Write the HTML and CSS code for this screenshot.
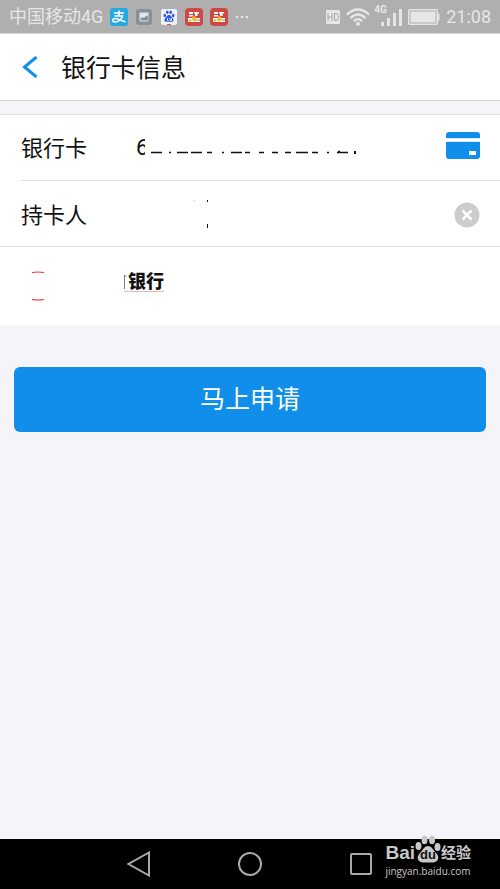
FILE: index.html
```html
<!DOCTYPE html>
<html lang="zh-CN">
<head>
<meta charset="utf-8">
<meta name="viewport" content="width=device-width, initial-scale=1">
<title>银行卡信息</title>
<link rel="stylesheet" href="styles.css">
</head>
<body>
<div class="status">
  <div class="status-left">
    <span class="carrier">中国移动4G</span>
    <svg class="app" viewBox="0 0 18 18"><rect width="18" height="18" rx="3" fill="#25a9e0"/><path d="M4 5h10M9 2.500v5M4.500 8h8c-1 3-4 6-7.500 6-3 0-3-3.500 0-3.500 3 0 6 2 10.500 3.500" fill="none" stroke="#fff" stroke-width="1.500"/></svg>
    <svg class="app" viewBox="0 0 18 18"><rect x="1" y="1" width="16" height="16" rx="3" fill="#84919b"/><rect x="4.500" y="4.500" width="9" height="9" rx="1" fill="#e2e6e8"/><path d="M5.500 12.500v-2l2-1.500 1.500 1 2.500-2.500 1.500 1v4z" fill="#84919b"/></svg>
    <svg class="app" viewBox="0 0 18 18"><rect x="1" y="1" width="16" height="16" rx="2" fill="#f0f1f5"/><g fill="#2c5be0"><ellipse cx="4.800" cy="7.500" rx="1.300" ry="1.800"/><ellipse cx="7.300" cy="4.300" rx="1.300" ry="1.800"/><ellipse cx="10.700" cy="4.300" rx="1.300" ry="1.800"/><ellipse cx="13.200" cy="7.500" rx="1.300" ry="1.800"/><path d="M9 7c2 0 2.500 2 4 3.500 1.500 2 0 3.500-2 3.200h-4c-2 .3-3.500-1.200-2-3.200C6.500 9 7 7 9 7z"/></g><path d="M7.500 10v2.500h1M10 10v2.500h1.500V10" fill="none" stroke="#fff" stroke-width=".8"/><path d="M7 16.500h4" stroke="#e05050"/></svg>
    <svg class="app" viewBox="0 0 18 18"><rect width="18" height="18" rx="4" fill="#d04744"/><path d="M4 4h4v2H4zM9 4h5v1.500h-1.500V8H10V5.500H9zM4 7h4v1.500H4zM3 10h12v4H3z" fill="#fff"/><path d="M8 8.500h2.500L12 12l-2.500 1.500L7 12zM3.500 11.500h3v2h-3z" fill="#edbd28"/><path d="M12 12h3" stroke="#bf7470"/></svg>
    <svg class="app" viewBox="0 0 18 18"><rect width="18" height="18" rx="4" fill="#d04744"/><path d="M4 4h4v2H4zM9 4h5v1.500h-1.500V8H10V5.500H9zM4 7h4v1.500H4zM3 10h12v4H3z" fill="#fff"/><path d="M8 8.500h2.500L12 12l-2.500 1.500L7 12zM3.500 11.500h3v2h-3z" fill="#edbd28"/><path d="M12 12h3" stroke="#bf7470"/></svg>
    <svg class="more" viewBox="0 0 14 4" fill="#e6e6e6"><circle cx="2" cy="2" r="1.300"/><circle cx="7" cy="2" r="1.300"/><circle cx="12" cy="2" r="1.300"/></svg>
  </div>
  <div class="status-right">
    <svg class="hd" viewBox="0 0 14 14"><rect width="14" height="14" rx="1" fill="#e6e6e6"/><path d="M2 3v8M6 3v8M2 7h4M8.500 3.500v7h1.500q2.500 0 2.500-3.500T10 3.500z" fill="none" stroke="#aaa" stroke-width="1"/></svg>
    <svg class="wifi" viewBox="0 0 24 18"><g fill="none" stroke="#e6e6e6" stroke-width="2.400"><path d="M1 6.500Q12-3.500 23 6.500M4.500 10Q12 3 19.500 10M8 13.200Q12 9 16 13.200"/></g><circle cx="12" cy="15.700" r="2" fill="#e6e6e6"/></svg>
    <div class="cell"><span class="network">4G</span><svg class="bars" viewBox="0 0 21 18" fill="#e6e6e6"><path d="M0 14h3v4H0zM6 10h3v8H6zM12 5h3v13h-3zM18 1h3v17h-3z"/></svg></div>
    <svg class="battery" viewBox="0 0 32 16"><rect x=".75" y=".75" width="28.500" height="14.500" rx="1" fill="none" stroke="#e6e6e6" stroke-width="1.500"/><rect x="2.500" y="2.500" width="25" height="11" fill="#e6e6e6"/><path d="M30 4.500h1.500v7H30z" fill="#e6e6e6"/></svg>
    <time class="clock">21:08</time>
  </div>
</div>
<header class="header">
  <button class="back" type="button" aria-label="返回"><svg viewBox="0 0 16 22"><path d="M14.500 1L2.500 11l12 10" fill="none" stroke="#108ee9" stroke-width="3"/></svg></button>
  <h1 class="title">银行卡信息</h1>
</header>
<main class="main">
  <form class="form">
    <div class="card">
      <div class="row row-card">
        <label class="label" for="number">银行卡</label>
        <div class="value">
          <input class="number" id="number" value="6">
          <svg class="strokes" viewBox="0 0 214 24" fill="none" stroke="#111" stroke-width="1.600"><path d="M6 16.500h11M24 16.500h2M32 16.500h11M46 16.500h11M62 16.500h5M77 16.500h2M86 16.500h11M100 16.500h5M114 16.500h5M127 16.500h6M140 16.500h6M151 16.500h12M167 16.500h6M182 16.500h2M192 16.500h11M193 15.500h2"/><path d="M210 15v3" stroke-width="2"/></svg>
        </div>
        <button class="icon" type="button" aria-label="选择银行卡"><svg class="bank-card" viewBox="0 0 34 27"><rect width="34" height="27" rx="3" fill="#108ee9"/><path d="M0 6h34v4H0z" fill="#d8edfc"/><path d="M0 7h34v2H0z" fill="#fff"/><path d="M23 19h7v4h-7z" fill="#fff"/></svg></button>
      </div>
      <div class="row row-holder">
        <label class="label" for="holder">持卡人</label>
        <div class="value">
          <input class="holder" id="holder">
          <svg class="strokes" viewBox="0 0 20 34"><path d="M0 2h1v1H0z" fill="#ccc"/><path d="M13 2h1v2h-1zM13 26h1v4h-1z" fill="#111"/></svg>
        </div>
        <button class="icon" type="button" aria-label="清除"><svg class="clear" viewBox="0 0 26 26"><circle cx="13" cy="13" r="12.500" fill="#ccc"/><path d="M8.500 8.500l9 9M17.500 8.500l-9 9" stroke="#fff" stroke-width="2.500"/></svg></button>
      </div>
      <div class="bank">
        <svg class="bank-logo" viewBox="0 0 14 30" fill="none" stroke="#e2373c" stroke-width="1.200"><path d="M1 1.500q6-1 12 0M1 28.500q6 1 12 0"/></svg>
        <div class="bank-box">
          <svg class="bank-edge" viewBox="0 0 4 16" fill="none"><path d="M.5 1v14" stroke="#777"/><path d="M1 2h2" stroke="#aaa"/></svg>
          <span class="bank-name">银行</span>
        </div>
      </div>
    </div>
    <button class="submit" type="button">马上申请</button>
  </form>
</main>
<nav class="nav">
  <button class="key" type="button" aria-label="返回键"><svg viewBox="0 0 26 26"><path d="M23 1.500v23L2.500 13z"/></svg></button>
  <button class="key" type="button" aria-label="主屏幕"><svg viewBox="0 0 26 26"><circle cx="13" cy="13" r="11"/></svg></button>
  <button class="key" type="button" aria-label="最近任务"><svg viewBox="0 0 26 26"><rect x="3" y="3" width="20" height="20" rx="1"/></svg></button>
  <div class="mark">
    <div class="mark-top"><span class="bai">Bai</span><span class="paw"><svg viewBox="0 0 26 28" fill="#c8c8c8"><ellipse cx="3.500" cy="11" rx="3" ry="4"/><ellipse cx="9.500" cy="5" rx="3" ry="4.200"/><ellipse cx="17" cy="5" rx="3" ry="4.200"/><ellipse cx="22.500" cy="12" rx="3" ry="4"/><path d="M13 11c4 0 5 4 8 7 5 5 1 10-4 9.500H9C4 28-0 23 5 18c3-3 4-7 8-7z"/></svg><span class="du">du</span></span><span class="exp">经验</span></div>
    <div class="site">jingyan.baidu.com</div>
  </div>
</nav>
</body>
</html>
```

FILE: styles.css
```css
* { box-sizing: border-box; }

body {
  display: flex;
  flex-direction: column;
  min-height: 100vh;
  margin: 0;
  background: #f4f4f9;
  color: #111;
  font-family: Roboto, "Noto Sans CJK SC", sans-serif;
}

svg { display: block; }

button {
  padding: 0;
  border: 0;
  background: none;
  font: inherit;
}

.status {
  display: flex;
  align-items: center;
  justify-content: space-between;
  height: 34px;
  padding: 0 9px;
  background: #afafaf;
  border-bottom: 1px solid #d5d5d5;
  color: #e6e6e6;
}

.status-left,
.status-right {
  display: flex;
  align-items: center;
  gap: 7px;
}

.status-right { gap: 6px; }

.carrier,
.clock {
  padding-top: 1px;
  font-size: 18px;
  line-height: 24px;
}

.app {
  width: 18px;
  height: 18px;
}

.more {
  width: 14px;
  height: 4px;
}

.hd {
  width: 14px;
  height: 14px;
}

.wifi {
  width: 24px;
  height: 18px;
}

.cell {
  position: relative;
  padding-left: 5px;
}

.network {
  position: absolute;
  top: -4px;
  left: -2px;
  font-size: 10px;
  font-weight: 700;
  line-height: 12px;
}

.bars {
  width: 21px;
  height: 18px;
}

.battery {
  width: 32px;
  height: 16px;
}

.header {
  display: flex;
  align-items: center;
  gap: 23px;
  height: 67px;
  padding: 0 22px;
  background: #fff;
  border-bottom: 1px solid #d0d0d4;
}

.back svg {
  width: 16px;
  height: 22px;
}

.title {
  margin: 0;
  padding-top: 4px;
  font-size: 25px;
  font-weight: 400;
  line-height: 36px;
}

.main {
  flex: 1;
  padding-top: 13px;
}

.card {
  background: #fff;
  border-top: 1px solid #e4e4e6;
}

.row {
  display: flex;
  align-items: center;
  height: 66px;
  padding-right: 20px;
}

.row-card {
  margin-left: 21px;
  border-bottom: 1px solid #e4e4e6;
}

.row-holder {
  padding-top: 3px;
  padding-left: 21px;
  border-bottom: 1px solid #e4e4e6;
}

.label {
  width: 115px;
  padding-top: 2px;
  font-size: 22px;
  line-height: 32px;
}

.value {
  display: flex;
  flex: 1;
  align-items: center;
}

.value input {
  height: 32px;
  padding: 0;
  border: 0;
  outline: 0;
  background: none;
  color: #111;
  font: 22px/32px Roboto, sans-serif;
}

.value .number { width: 9px; }

.value .holder { width: 58px; }

.row-card .strokes {
  width: 214px;
  height: 24px;
}

.row-holder .strokes {
  width: 20px;
  height: 34px;
}

.bank-card {
  width: 34px;
  height: 27px;
  margin-bottom: 4px;
}

.clear {
  width: 26px;
  height: 26px;
}

.bank {
  display: flex;
  align-items: center;
  gap: 79px;
  height: 78px;
  padding: 0 31px;
}

.bank-logo {
  width: 14px;
  height: 30px;
}

.bank-box {
  display: flex;
  align-items: center;
  margin-bottom: 8px;
  border-bottom: 1px solid #efb9b9;
}

.bank-edge {
  width: 4px;
  height: 16px;
}

.bank-name {
  font-size: 18px;
  font-weight: 900;
  line-height: 18px;
}

.submit {
  display: block;
  width: calc(100% - 28px);
  height: 65px;
  margin: 42px 14px;
  border-radius: 6px;
  background: #108ee9;
  color: #fff;
  font-size: 25px;
  line-height: 36px;
}

.nav {
  position: relative;
  display: flex;
  justify-content: center;
  align-items: center;
  gap: 85px;
  height: 50px;
  background: #000;
}

.key svg {
  width: 26px;
  height: 26px;
  fill: none;
  stroke: #a8a8a8;
  stroke-width: 2;
}

.mark {
  position: absolute;
  right: 29px;
  bottom: 10px;
  color: #c8c8c8;
}

.mark-top {
  display: flex;
  align-items: flex-end;
}

.bai {
  font: 700 19px/20px "Liberation Sans", sans-serif;
}

.paw {
  position: relative;
}

.paw svg {
  width: 26px;
  height: 28px;
}

.du {
  position: absolute;
  right: 0;
  bottom: 1px;
  left: 0;
  color: #111;
  font: 700 13px/14px "Liberation Sans", sans-serif;
  text-align: center;
}

.exp {
  font-size: 15px;
  font-weight: 700;
  line-height: 20px;
}

.site {
  font: 10px/16px "Open Sans", sans-serif;
}
```
